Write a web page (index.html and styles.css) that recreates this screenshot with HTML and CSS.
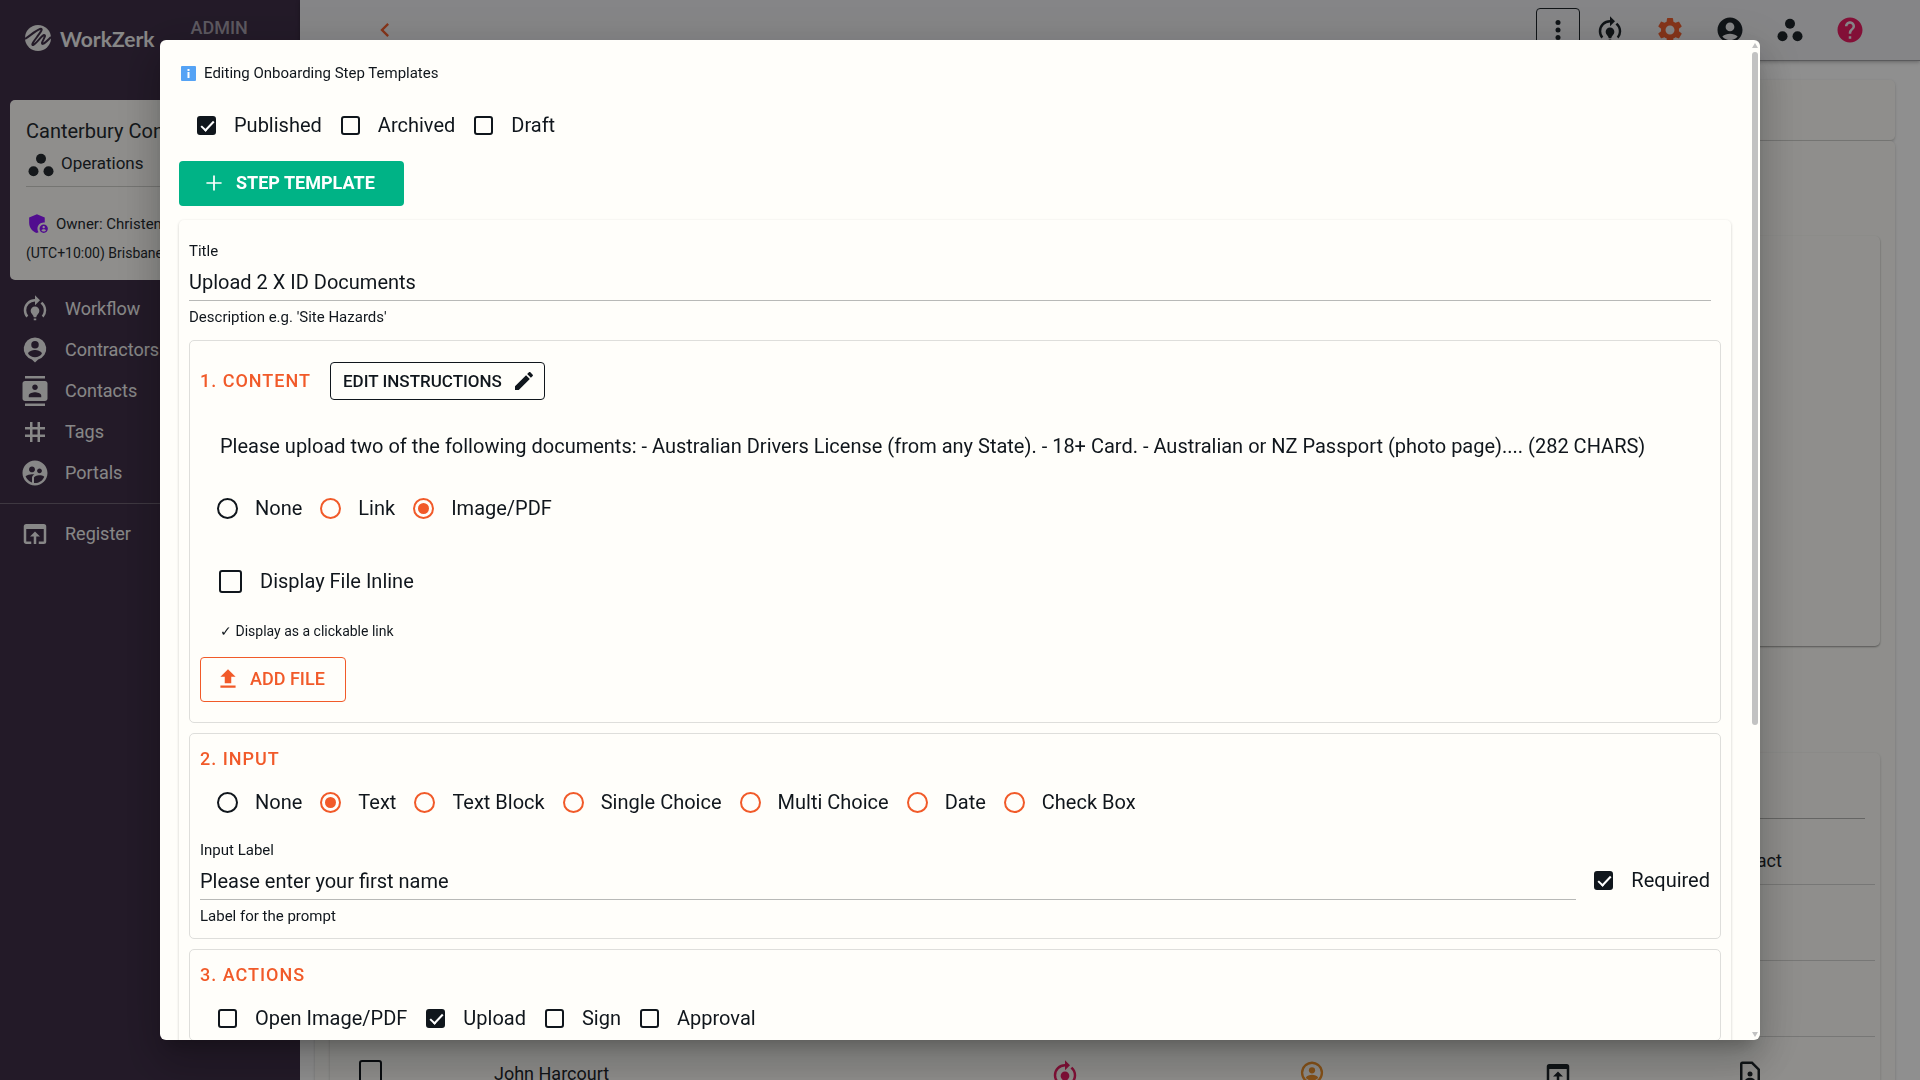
FILE: index.html
```html
<!DOCTYPE html>
<html lang="en">
<head>
    <meta charset="UTF-8">
    <meta name="viewport" content="width=device-width, initial-scale=1.0">
    <title>WorkZerk Admin</title>
    <link rel="stylesheet" href="styles.css">
</head>
<body>
    <!-- shared icons -->
    <svg class="sprite" aria-hidden="true">
        <symbol id="workflow" viewBox="0 0 24 24"><path d="M15.5 13.5c0 2-2.5 3.5-2.5 5h-2c0-1.5-2.5-3-2.5-5a3.5 3.5 0 0 1 7 0zM13 19.5h-2V21h2zM19 13c0 1.68-.59 3.21-1.58 4.42l1.42 1.42A8.96 8.96 0 0 0 21 13c0-2.74-1.23-5.19-3.16-6.84l-1.42 1.42A6.96 6.96 0 0 1 19 13zM16 5l-4-4v3a9 9 0 0 0-9 9c0 2.23.82 4.27 2.16 5.84l1.42-1.42A6.96 6.96 0 0 1 5 13a7 7 0 0 1 7-7v3z"/></symbol>
        <symbol id="spaces" viewBox="0 0 24 24"><circle cx="12" cy="7" r="4"/><circle cx="6" cy="17" r="4"/><circle cx="18" cy="17" r="4"/></symbol>
        <symbol id="register" viewBox="0 0 24 24"><path d="M19 4H5a2 2 0 0 0-2 2v12c0 1.1.89 2 2 2h4v-2H5V8h14v10h-4v2h4a2 2 0 0 0 2-2V6a2 2 0 0 0-2-2zm-7 6l-4 4h3v6h2v-6h3z"/></symbol>
    </svg>

    <div class="app">
        <aside class="sidebar">
            <div class="brand">
                <svg class="logo" viewBox="0 0 26 26"><circle cx="13" cy="13" r="13"/><path class="logo-line" d="M0 14C6 10 10 6 15 4C19 3 15 8 12 12C9 16 6 20 8 20C12 18 16 11 19 10C22 10 17 16 17 18C17 21 22 16 26 12"/></svg>
                <span class="brand-name">WorkZerk</span>
                <span class="role">ADMIN</span>
            </div>
            <div class="company">
                <div class="company-name">Canterbury Contracting</div>
                <div class="company-unit"><svg class="icon"><use href="#spaces"/></svg>Operations</div>
                <div class="company-owner"><svg class="shield" viewBox="0 0 24 24"><path d="M17 11c.34 0 .67.04 1 .09V6.27L10.5 3 3 6.27v4.91c0 4.54 3.2 8.79 7.5 9.82.55-.13 1.08-.32 1.6-.55-.69-.98-1.1-2.17-1.1-3.45 0-3.31 2.69-6 6-6z"/><path d="M17 13c-2.21 0-4 1.79-4 4s1.79 4 4 4 4-1.79 4-4-1.79-4-4-4zm0 1.38c.62 0 1.12.51 1.12 1.12s-.51 1.12-1.12 1.12-1.12-.51-1.12-1.12.5-1.12 1.12-1.12zm0 5.37c-.93 0-1.74-.46-2.24-1.17.05-.72 1.51-1.08 2.24-1.08s2.19.36 2.24 1.08c-.5.71-1.31 1.17-2.24 1.17z"/></svg>Owner: Christensen</div>
                <div class="company-zone">(UTC+10:00) Brisbane</div>
            </div>
            <nav class="menu">
                <a href="#"><svg class="icon"><use href="#workflow"/></svg>Workflow</a>
                <a href="#"><svg class="icon" viewBox="0 0 24 24"><path fill-rule="evenodd" d="M12 2a9 9 0 0 0-2.5 17.65L12 22l2.5-2.35A9 9 0 0 0 12 2zm0 2.7a3 3 0 1 1 0 6 3 3 0 0 1 0-6zm0 13c-2.3 0-4.3-1.1-5.5-2.8.1-1.9 3.7-2.9 5.5-2.9s5.4 1 5.5 2.9c-1.2 1.7-3.2 2.8-5.5 2.8z"/></svg>Contractors</a>
                <a href="#"><svg class="icon" viewBox="0 0 24 24"><path d="M20 0H4v2h16V0zM4 24h16v-2H4v2zM20 4H4c-1.1 0-2 .9-2 2v12c0 1.1.9 2 2 2h16c1.1 0 2-.9 2-2V6c0-1.1-.9-2-2-2zm-8 2.75c1.24 0 2.25 1.01 2.25 2.25s-1.01 2.25-2.25 2.25S9.75 10.24 9.75 9 10.76 6.75 12 6.75zM17 17H7v-1.5c0-1.67 3.33-2.5 5-2.5s5 .83 5 2.5V17z"/></svg>Contacts</a>
                <a href="#"><svg class="icon" viewBox="0 0 24 24"><path d="M20 10V8h-4V4h-2v4h-4V4H8v4H4v2h4v4H4v2h4v4h2v-4h4v4h2v-4h4v-2h-4v-4h4zm-6 4h-4v-4h4v4z"/></svg>Tags</a>
                <a href="#"><svg class="icon" viewBox="0 0 24 24"><path d="M11.99 2c-5.52 0-10 4.48-10 10s4.48 10 10 10 10-4.48 10-10-4.48-10-10-10zm3.61 6.34c1.07 0 1.93.86 1.93 1.93 0 1.07-.86 1.93-1.93 1.93-1.07 0-1.93-.86-1.93-1.93-.01-1.07.86-1.93 1.93-1.93zm-6-1.58c1.3 0 2.36 1.06 2.36 2.36 0 1.3-1.06 2.36-2.36 2.36s-2.36-1.06-2.36-2.36c0-1.31 1.05-2.36 2.36-2.36zm0 9.13v3.75c-2.4-.75-4.3-2.6-5.14-4.96 1.05-1.12 3.67-1.69 5.14-1.69.53 0 1.2.08 1.9.22-1.64.87-1.9 2.02-1.9 2.68zM11.99 20c-.27 0-.53-.01-.79-.04v-4.07c0-1.42 2.94-2.13 4.4-2.13 1.07 0 2.92.39 3.84 1.15-1.17 2.97-4.06 5.09-7.45 5.09z"/></svg>Portals</a>
                <hr>
                <a href="#"><svg class="icon"><use href="#register"/></svg>Register</a>
            </nav>
        </aside>

        <div class="page">
            <header class="topbar">
                <button class="back" aria-label="Back"><svg viewBox="0 0 24 24"><path d="M15.41 7.41L14 6l-6 6 6 6 1.41-1.41L10.83 12z"/></svg></button>
                <div class="tools">
                    <button class="more" aria-label="More"><svg class="icon" viewBox="0 0 24 24"><circle cx="12" cy="6" r="2"/><circle cx="12" cy="12" r="2"/><circle cx="12" cy="18" r="2"/></svg></button>
                    <button aria-label="Workflow"><svg class="icon"><use href="#workflow"/></svg></button>
                    <button class="orange" aria-label="Settings"><svg class="icon" viewBox="0 0 24 24"><path d="M19.14 12.94c.04-.3.06-.61.06-.94 0-.32-.02-.64-.07-.94l2.03-1.58c.18-.14.23-.41.12-.61l-1.92-3.32c-.12-.22-.37-.29-.59-.22l-2.39.96c-.5-.38-1.03-.7-1.62-.94l-.36-2.54c-.04-.24-.24-.41-.48-.41h-3.84c-.24 0-.43.17-.47.41l-.36 2.54c-.59.24-1.13.57-1.62.94l-2.39-.96c-.22-.08-.47 0-.59.22L2.74 8.87c-.12.21-.08.47.12.61l2.03 1.58c-.05.3-.09.63-.09.94s.02.64.07.94l-2.03 1.58c-.18.14-.23.41-.12.61l1.92 3.32c.12.22.37.29.59.22l2.39-.96c.5.38 1.03.7 1.62.94l.36 2.54c.05.24.24.41.48.41h3.84c.24 0 .44-.17.47-.41l.36-2.54c.59-.24 1.13-.56 1.62-.94l2.39.96c.22.08.47 0 .59-.22l1.92-3.32c.12-.22.07-.47-.12-.61l-2.01-1.58zM12 15.6c-1.98 0-3.6-1.62-3.6-3.6s1.62-3.6 3.6-3.6 3.6 1.62 3.6 3.6-1.62 3.6-3.6 3.6z"/></svg></button>
                    <button aria-label="Account"><svg class="icon" viewBox="0 0 24 24"><path d="M12 2C6.48 2 2 6.48 2 12s4.48 10 10 10 10-4.48 10-10S17.52 2 12 2zm0 4c1.93 0 3.5 1.57 3.5 3.5S13.93 13 12 13s-3.5-1.57-3.5-3.5S10.07 6 12 6zm0 14c-2.03 0-4.43-.82-6.14-2.88C7.55 15.8 9.68 15 12 15s4.45.8 6.14 2.12C16.43 19.18 14.03 20 12 20z"/></svg></button>
                    <button aria-label="Workspaces"><svg class="icon"><use href="#spaces"/></svg></button>
                    <button class="pink" aria-label="Help"><svg class="icon" viewBox="0 0 24 24"><path d="M12 2C6.48 2 2 6.48 2 12s4.48 10 10 10 10-4.48 10-10S17.52 2 12 2zm1 17h-2v-2h2v2zm2.07-7.75l-.9.92C13.45 12.9 13 13.5 13 15h-2v-.5c0-1.1.45-2.1 1.17-2.83l1.24-1.26c.37-.36.59-.86.59-1.41 0-1.1-.9-2-2-2s-2 .9-2 2H8c0-2.21 1.79-4 4-4s4 1.79 4 4c0 .88-.36 1.68-.93 2.25z"/></svg></button>
                </div>
            </header>
            <main class="content">
                <div class="tabs"></div>
                <div class="board">
                    <div class="summary"></div>
                    <div class="people">
                        <div class="search"></div>
                        <table>
                            <colgroup>
                                <col class="col-check"><col class="col-name"><col class="col-state"><col class="col-state"><col class="col-state"><col class="col-contact"><col>
                            </colgroup>
                            <thead>
                                <tr><th></th><th></th><th></th><th></th><th></th><th>Contact</th><th></th></tr>
                            </thead>
                            <tbody>
                                <tr><td></td><td></td><td></td><td></td><td></td><td></td><td></td></tr>
                                <tr><td></td><td></td><td></td><td></td><td></td><td></td><td></td></tr>
                                <tr>
                                    <td><input type="checkbox" class="check check-large" aria-label="Select John Harcourt"></td>
                                    <td class="name">John Harcourt</td>
                                    <td class="pink"><svg class="icon"><use href="#workflow"/></svg></td>
                                    <td class="amber"><svg class="icon" viewBox="0 0 24 24"><path fill-rule="evenodd" d="M12 2a9 9 0 0 0-4 17l4 4 4-4a9 9 0 0 0-4-17zm0 2a7 7 0 1 1 0 14 7 7 0 0 1 0-14z"/><circle cx="12" cy="9" r="2.5"/><path d="M7 15c1-2 3-2.5 5-2.5s4 .5 5 2.5c-2 3-8 3-10 0z"/></svg></td>
                                    <td><svg class="icon"><use href="#register"/></svg></td>
                                    <td><svg class="icon" viewBox="0 0 24 24"><path d="M14 2H6a2 2 0 0 0-2 2v16a2 2 0 0 0 2 2h12a2 2 0 0 0 2-2V8zm4 18H6V4h7.17L18 8.83z"/><circle cx="12" cy="12" r="2"/><path d="M8 18v-.6c0-1.8 2.6-2.4 4-2.4s4 .6 4 2.4V18z"/></svg></td>
                                    <td></td>
                                </tr>
                            </tbody>
                        </table>
                    </div>
                </div>
            </main>
        </div>
    </div>

    <div class="overlay">
        <div class="dialog" role="dialog" aria-modal="true" aria-labelledby="dialogTitle">
            <div class="dialog-body">
                <div class="dialog-title" id="dialogTitle">
                    <svg class="info" viewBox="0 0 15 15"><rect width="15" height="15" rx="1"/><path d="M6.5 3h2v2h-2zM6.5 6h2v6h-2z"/></svg>
                    Editing Onboarding Step Templates
                </div>
                <div class="options filters">
                    <label><input type="checkbox" class="check" checked>Published</label>
                    <label><input type="checkbox" class="check">Archived</label>
                    <label><input type="checkbox" class="check">Draft</label>
                </div>
                <button class="btn btn-green"><svg viewBox="0 0 24 24"><path d="M19 12.8h-6.2V19h-1.6v-6.2H5v-1.6h6.2V5h1.6v6.2H19z"/></svg>STEP TEMPLATE</button>

                <form class="card">
                    <div class="field">
                        <label for="title">Title</label>
                        <input type="text" id="title" value="Upload 2 X ID Documents">
                        <small>Description e.g. 'Site Hazards'</small>
                    </div>

                    <section class="panel panel-content">
                        <div class="panel-head">
                            <h2>1. CONTENT</h2>
                            <button type="button" class="btn-edit">EDIT INSTRUCTIONS<svg viewBox="0 0 24 24"><path d="M3 17.25V21h3.75L17.81 9.94l-3.75-3.75L3 17.25zM20.71 7.04c.39-.39.39-1.02 0-1.41l-2.34-2.34c-.39-.39-1.02-.39-1.41 0l-1.83 1.83 3.75 3.75 1.83-1.83z"/></svg></button>
                        </div>
                        <p class="instructions">Please upload two of the following documents: - Australian Drivers License (from any State). - 18+ Card. - Australian or NZ Passport (photo page).... (282 CHARS)</p>
                        <div class="options">
                            <label><input type="radio" name="content" class="radio radio-dark">None</label>
                            <label><input type="radio" name="content" class="radio">Link</label>
                            <label><input type="radio" name="content" class="radio" checked>Image/PDF</label>
                        </div>
                        <div class="options inline-option">
                            <label><input type="checkbox" class="check check-large">Display File Inline</label>
                        </div>
                        <p class="hint">✓ Display as a clickable link</p>
                        <button type="button" class="btn btn-outline"><svg viewBox="0 0 24 24"><path d="M9 16h6v-6h4l-7-7-7 7h4zm-4 2h14v2H5z"/></svg>ADD FILE</button>
                    </section>

                    <section class="panel">
                        <h2>2. INPUT</h2>
                        <div class="options">
                            <label><input type="radio" name="input" class="radio radio-dark">None</label>
                            <label><input type="radio" name="input" class="radio" checked>Text</label>
                            <label><input type="radio" name="input" class="radio">Text Block</label>
                            <label><input type="radio" name="input" class="radio">Single Choice</label>
                            <label><input type="radio" name="input" class="radio">Multi Choice</label>
                            <label><input type="radio" name="input" class="radio">Date</label>
                            <label><input type="radio" name="input" class="radio">Check Box</label>
                        </div>
                        <div class="prompt">
                            <div class="field">
                                <label for="prompt">Input Label</label>
                                <input type="text" id="prompt" value="Please enter your first name">
                                <small>Label for the prompt</small>
                            </div>
                            <div class="options">
                                <label><input type="checkbox" class="check" checked>Required</label>
                            </div>
                        </div>
                    </section>

                    <section class="panel">
                        <h2>3. ACTIONS</h2>
                        <div class="options">
                            <label><input type="checkbox" class="check">Open Image/PDF</label>
                            <label><input type="checkbox" class="check" checked>Upload</label>
                            <label><input type="checkbox" class="check">Sign</label>
                            <label><input type="checkbox" class="check">Approval</label>
                        </div>
                    </section>
                </form>
            </div>
            <div class="scrollbar" aria-hidden="true">
                <span class="arrow-up"></span>
                <span class="track"><span class="thumb"></span></span>
                <span class="arrow-down"></span>
            </div>
        </div>
    </div>
</body>
</html>
```
FILE: styles.css
```css
* {
    box-sizing: border-box;
}
body {
    margin: 0;
    height: 100vh;
    overflow: hidden;
    font-family: Roboto, sans-serif;
    font-size: 20px;
    line-height: 24px;
    color: #1d2429;
    background: #fff;
}
button, input {
    font: inherit;
    color: inherit;
}
button {
    cursor: pointer;
}
svg {
    fill: currentColor;
    flex-shrink: 0;
}
h2, p {
    margin: 0;
}
.sprite {
    display: none;
}
.icon {
    display: block;
    width: 30px;
    height: 30px;
}
.orange {
    color: #ee5e2e;
}
.pink {
    color: #e91e63;
}
.amber {
    color: #f0922b;
}

/* sidebar */
.app {
    display: flex;
    height: 100%;
    overflow: hidden;
}
.sidebar {
    width: 300px;
    flex-shrink: 0;
    background: #3f2f48;
    color: #f0f0f0;
}
.brand {
    display: flex;
    height: 100px;
    padding: 24px 25px;
}
.logo {
    width: 26px;
    height: 26px;
    margin-top: 1px;
}
.logo-line {
    fill: none;
    stroke: #3f2f48;
    stroke-width: 2;
}
.brand-name {
    margin-left: 9px;
    padding-top: 3px;
    font-family: Lato, sans-serif;
    font-size: 21px;
    font-weight: 700;
}
.role {
    margin-top: -8px;
    margin-left: 36px;
    font-size: 18px;
    font-weight: 500;
    color: #a79fac;
}
.company {
    height: 180px;
    margin: 0 10px;
    padding: 19px 16px;
    border-radius: 5px;
    background: #fffefa;
    color: #262b30;
    white-space: nowrap;
}
.company-unit {
    display: flex;
    gap: 5px;
    height: 44px;
    padding-top: 8px;
    border-bottom: 1px solid #d0d0cc;
    font-size: 17px;
}
.company-owner {
    display: flex;
    align-items: center;
    gap: 5px;
    margin-top: 24px;
    font-size: 15px;
}
.company-zone {
    margin-top: 5px;
    font-size: 14px;
}
.shield {
    width: 25px;
    height: 25px;
    color: #9018ff;
}
.company-unit .icon {
    margin-top: -1px;
}
.menu {
    padding-top: 8px;
}
.menu a {
    display: flex;
    align-items: center;
    gap: 15px;
    height: 41px;
    padding-left: 20px;
    font-size: 18px;
    color: inherit;
    text-decoration: none;
}
.menu hr {
    height: 1px;
    margin: 10px 0 9px;
    border: 0;
    background: #6f6474;
}

/* page behind the dialog */
.page {
    flex: 1;
    min-width: 0;
}
.topbar {
    display: flex;
    justify-content: space-between;
    align-items: center;
    height: 61px;
    padding: 0 55px 0 71px;
    background: #eeeef1;
    border-bottom: 1px solid #a0a0a4;
    box-shadow: 0 1px 4px rgba(0, 0, 0, 0.3);
}
.topbar button {
    padding: 0;
    border: 0;
    background: none;
}
.back {
    color: #ee5e2e;
}
.back svg {
    display: block;
    width: 28px;
    height: 28px;
}
.tools {
    display: flex;
    align-items: center;
    gap: 30px;
}
.tools .more {
    margin-right: -15px;
    padding: 6px;
    border: 1px solid #1d2429;
    border-radius: 4px;
}
.content {
    padding: 19px 25px 0 15px;
}
.tabs {
    height: 61px;
    border-radius: 5px;
    background: #fffefa;
    border-bottom: 1px solid #d5d5d2;
    box-shadow: 0 1px 3px rgba(0, 0, 0, 0.2);
}
.board {
    padding: 95px 15px 0;
    border-radius: 5px;
    background: #fffefa;
    box-shadow: 0 1px 3px rgba(0, 0, 0, 0.2);
}
.summary {
    height: 410px;
    border-radius: 5px;
    box-shadow: 0 1px 2px rgba(0, 0, 0, 0.4);
}
.people {
    margin-top: 107px;
    padding: 0 5px;
    border-radius: 5px;
    box-shadow: 0 1px 3px rgba(0, 0, 0, 0.2);
}
.search {
    height: 66px;
    margin: 0 10px;
    border-bottom: 1px solid #b5b5b2;
}
table {
    width: 100%;
    border-collapse: collapse;
    table-layout: fixed;
    font-size: 18px;
}
.col-check {
    width: 145px;
}
.col-name {
    width: 30%;
}
.col-state {
    width: 16%;
}
.col-contact {
    width: 9%;
}
th {
    height: 65px;
    padding: 20px 0 0;
    border-bottom: 1px solid #d5d5d2;
    font-weight: 400;
}
td {
    height: 76px;
    padding: 0;
    border-bottom: 1px solid #d5d5d2;
    text-align: center;
}
td:first-child {
    text-align: left;
    padding-left: 22px;
}
td.name {
    padding-left: 14px;
    text-align: left;
}
td .icon {
    margin: 0 auto;
}

/* dialog */
.overlay {
    position: fixed;
    inset: 0;
    padding: 40px 160px;
    background: rgba(0, 0, 0, 0.44);
}
.dialog {
    display: flex;
    height: 100%;
    overflow: hidden;
    border-radius: 6px;
    background: #fffefa;
    color: #10161c;
    box-shadow: 0 11px 15px -7px rgba(0, 0, 0, 0.2), 0 24px 38px 3px rgba(0, 0, 0, 0.14), 0 9px 46px 8px rgba(0, 0, 0, 0.12);
}
.dialog-body {
    flex: 1;
    min-width: 0;
    padding: 21px 21px 0 19px;
}
.dialog-title {
    display: flex;
    align-items: center;
    gap: 8px;
    padding-left: 2px;
    font-size: 15px;
}
.info {
    width: 15px;
    height: 15px;
}
.info rect {
    fill: #55a3f5;
}
.info path {
    fill: #fff;
}
.options {
    display: flex;
    gap: 18px;
    padding-left: 17px;
}
.options label {
    display: flex;
    align-items: center;
    gap: 18px;
    white-space: nowrap;
}
.filters {
    margin: 28px 0 24px;
}
.check, .radio {
    appearance: none;
    position: relative;
    flex-shrink: 0;
    width: 19px;
    height: 19px;
    margin: 0 0 0 1px;
    border: 2px solid #10161c;
    border-radius: 3px;
}
.check-large {
    width: 23px;
    height: 23px;
    margin-left: 2px;
}
.check:checked {
    background: #10161c;
}
.check:checked::after {
    content: "";
    position: absolute;
    left: 5px;
    top: 0;
    width: 5px;
    height: 11px;
    border: solid #fff;
    border-width: 0 2px 2px 0;
    transform: rotate(43deg);
}
.radio {
    width: 21px;
    height: 21px;
    margin: 0 -1px 0 0;
    border-radius: 50%;
    border-color: #f15a29;
}
.radio-dark {
    border-color: #10161c;
}
.radio:checked::after {
    content: "";
    position: absolute;
    left: 3px;
    top: 3px;
    width: 11px;
    height: 11px;
    border-radius: 50%;
    background: #f15a29;
}
.btn {
    display: flex;
    align-items: center;
    gap: 9px;
    height: 45px;
    padding: 0 29px 2px 22px;
    border: 0;
    border-radius: 4px;
    font-size: 18px;
    font-weight: 500;
}
.btn svg {
    width: 26px;
    height: 26px;
}
.btn-green {
    background: #00b386;
    color: #fff;
    font-weight: 700;
}
.btn-outline {
    padding: 0 20px 2px 14px;
    border: 1px solid #f15a29;
    background: none;
    color: #f15a29;
}
.card {
    margin-top: 14px;
    padding: 19px 10px 10px;
    border-radius: 5px;
    box-shadow: 0 1px 3px rgba(0, 0, 0, 0.2);
}
.field {
    display: flex;
    flex-direction: column;
    font-size: 15px;
}
.field input {
    width: 100%;
    height: 38px;
    padding: 0;
    border: 0;
    border-bottom: 1px solid #b8b9b7;
    background: none;
    font-size: 20px;
    outline: none;
}
.field small {
    margin-top: 4px;
    font-size: 15px;
}
.card > .field {
    margin-right: 10px;
}
.panel {
    margin-top: 10px;
    padding: 13px 10px 10px;
    border: 1px solid #dededb;
    border-radius: 5px;
}
.panel h2 {
    margin-bottom: 19px;
    font-size: 18px;
    font-weight: 500;
    letter-spacing: 1px;
    color: #f15a29;
}
.panel-content {
    margin-top: 11px;
    padding: 21px 10px 20px;
}
.panel-head {
    display: flex;
    align-items: center;
    gap: 19px;
}
.panel-head h2 {
    margin: 0;
}
.btn-edit {
    display: flex;
    align-items: center;
    gap: 10px;
    height: 38px;
    padding: 0 8px 0 12px;
    border: 1px solid #10161c;
    border-radius: 4px;
    background: none;
    font-size: 17px;
    font-weight: 500;
}
.btn-edit svg {
    width: 24px;
    height: 24px;
}
.instructions {
    margin: 34px 0 38px 20px;
}
.inline-option {
    margin: 49px 0 26px;
}
.hint {
    margin: 0 0 14px 20px;
    font-size: 14px;
}
.prompt {
    display: flex;
    align-items: center;
    margin-top: 24px;
}
.prompt .field {
    flex: 1;
}
.prompt .options {
    padding-bottom: 6px;
}

/* drawn scrollbar */
.scrollbar {
    display: flex;
    flex-direction: column;
    gap: 4px;
    width: 8px;
    padding: 3px 2px 3px 0;
}
.arrow-up, .arrow-down {
    border: 3px solid transparent;
}
.arrow-up {
    border-top: 0;
    border-bottom: 5px solid #c2c2c2;
}
.arrow-down {
    border-bottom: 0;
    border-top: 5px solid #c2c2c2;
}
.track {
    flex: 1;
}
.thumb {
    display: block;
    height: 69%;
    border-radius: 3px;
    background: #c2c2c2;
}
```
